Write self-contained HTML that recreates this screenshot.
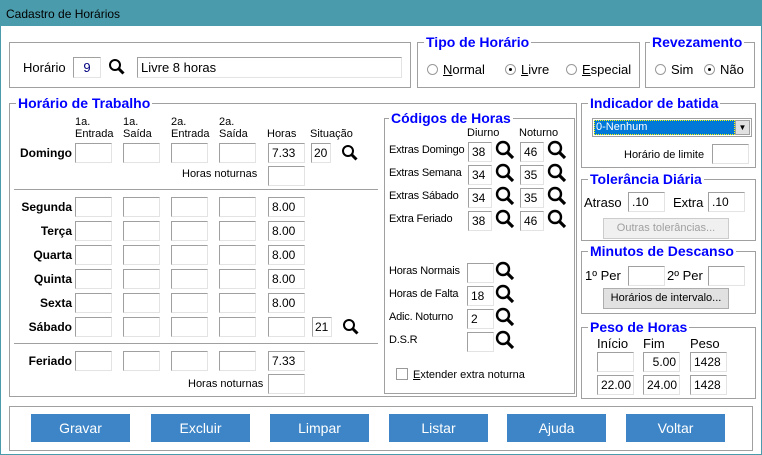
<!DOCTYPE html>
<html><head><meta charset="utf-8"><style>
*{box-sizing:border-box;margin:0;padding:0}
body{width:762px;height:455px;background:#fff;position:relative;overflow:hidden;font-family:"Liberation Sans",Arial,sans-serif;font-size:11px;color:#000}
.a{position:absolute;white-space:nowrap}
.t{position:absolute;left:0;top:0;width:762px;height:26px;background:#4a9bab;color:#000;font-size:12px;padding:7px 0 0 6px}
.fr{position:absolute;border:1px solid #4a9bab;border-top:none;left:0;top:26px;width:762px;height:429px}
.g{position:absolute;border:1px solid #a0a0a0;box-shadow:inset 1px 1px 0 #fff}
.cap{position:absolute;background:#fff;color:#0000ff;font-weight:bold;font-size:14px;padding:0 2px;top:-10px;left:6px;line-height:18px}
.i{position:absolute;height:20px;border:1px solid #e3e3e3;border-top-color:#a0a0a0;border-left-color:#a0a0a0;background:#fff;font-size:12px;padding:3px 0 0 3px;line-height:13px}
.b{font-weight:bold;font-size:12px}
.btn{position:absolute;top:414px;height:28px;width:99px;background:#3d85c6;color:#fff;font-size:14px;text-align:center;line-height:28px}
.mg{position:absolute;width:18px;height:18px}
.r{display:inline-block;width:11px;height:11px;border-radius:50%;border:1px solid #999;vertical-align:-1px;margin-right:5px;position:relative;background:#fff}
.r.on:after{content:"";position:absolute;left:3px;top:3px;width:3px;height:3px;border-radius:50%;background:#000}
.sb{position:absolute;height:21px;border:1px solid #adadad;background:#e1e1e1;font-size:11px;text-align:center;line-height:18px}
.hl{position:absolute;height:2px;border-top:1px solid #a0a0a0;border-bottom:1px solid #fff}
</style></head><body>
<div class="t">Cadastro de Horários</div>
<div class="fr"></div>

<div class="g" style="left:9px;top:42px;width:402px;height:46px"></div>
<div class="a" style="left:23px;top:60px;font-size:13px">Horário</div>
<div class="i" style="left:73px;top:57px;width:28px;height:21px;text-align:center;padding-left:0;color:#000080;font-size:13px">9</div>
<svg class="mg" style="left:108px;top:58px" viewBox="0 0 18 18"><circle cx="7" cy="7" r="5" fill="none" stroke="#000" stroke-width="2"/><path d="M10.5 10.5 L15.5 15.5" stroke="#000" stroke-width="3"/></svg>
<div class="i" style="left:137px;top:57px;width:265px;height:21px;font-size:13px">Livre 8 horas</div>

<div class="g" style="left:417px;top:42px;width:223px;height:46px"><div class="cap">Tipo de Horário</div></div>
<div class="a" style="left:427px;top:62px;font-size:13px"><span class="r"></span><u>N</u>ormal</div>
<div class="a" style="left:505px;top:62px;font-size:13px"><span class="r on"></span><u>L</u>ivre</div>
<div class="a" style="left:566px;top:62px;font-size:13px"><span class="r"></span><u>E</u>special</div>
<div class="g" style="left:645px;top:42px;width:110px;height:46px"><div class="cap" style="left:4px">Revezamento</div></div>
<div class="a" style="left:655px;top:62px;font-size:13px"><span class="r"></span>Sim</div>
<div class="a" style="left:704px;top:62px;font-size:13px"><span class="r on"></span>Não</div>

<div class="g" style="left:9px;top:103px;width:568px;height:294px"><div class="cap" style="left:6px">Horário de Trabalho</div></div>
<div class="a" style="left:75px;top:116px;line-height:12px">1a.<br>Entrada</div>
<div class="a" style="left:123px;top:116px;line-height:12px">1a.<br>Saída</div>
<div class="a" style="left:171px;top:116px;line-height:12px">2a.<br>Entrada</div>
<div class="a" style="left:219px;top:116px;line-height:12px">2a.<br>Saída</div>
<div class="a" style="left:267px;top:128px">Horas</div>
<div class="a" style="left:310px;top:128px">Situação</div>
<div class="hl" style="left:14px;top:189px;width:364px"></div>
<div class="hl" style="left:14px;top:343px;width:364px"></div>
<div class="a" style="left:182px;top:168px">Horas noturnas</div>
<div class="a" style="left:188px;top:378px">Horas noturnas</div>
<div class="i" style="left:268px;top:166px;width:37px"></div>
<div class="i" style="left:268px;top:374px;width:37px"></div>

<div id="rows"></div>
<script>
var rows=[["Domingo",143,"7.33","20",1],["Segunda",197,"8.00"],["Terça",221,"8.00"],["Quarta",245,"8.00"],["Quinta",269,"8.00"],["Sexta",293,"8.00"],["Sábado",317,"","21",1],["Feriado",351,"7.33"]];
var h="";
rows.forEach(function(r){
h+='<div class="a b" style="right:'+(762-72)+'px;top:'+(r[1]+3)+'px">'+r[0]+'</div>';
[75,123,171,219].forEach(function(x){h+='<div class="i" style="left:'+x+'px;top:'+r[1]+'px;width:37px"></div>';});
h+='<div class="i" style="left:268px;top:'+r[1]+'px;width:37px">'+r[2]+'</div>';
if(r[3]){var sx=r[0]=="Domingo"?311:312;h+='<div class="i" style="left:'+sx+'px;top:'+r[1]+'px;width:20px;padding-left:2px">'+r[3]+'</div>';
h+='<svg class="mg" style="left:'+(sx+30)+'px;top:'+(r[1]+1)+'px" viewBox="0 0 18 18"><circle cx="7" cy="7" r="5" fill="none" stroke="#000" stroke-width="2"/><path d="M10.5 10.5 L15.5 15.5" stroke="#000" stroke-width="3"/></svg>';}
});
var cod=[["Extras Domingo",140,"38","46"],["Extras Semana",163,"34","35"],["Extras Sábado",186,"34","35"],["Extra Feriado",209,"38","46"]];
var mg='viewBox="0 0 20 20"><circle cx="8" cy="8" r="6" fill="none" stroke="#000" stroke-width="2.4"/><path d="M12 12 L18 18" stroke="#000" stroke-width="3.2"/></svg>';
cod.forEach(function(c){
h+='<div class="a" style="left:389px;top:'+(c[1]+4)+'px;letter-spacing:-0.2px">'+c[0]+'</div>';
h+='<div class="i" style="left:468px;top:'+(c[1]+2)+'px;width:24px">'+c[2]+'</div>';
h+='<svg class="mg" style="left:495px;top:'+c[1]+'px;width:20px;height:20px" '+mg;
h+='<div class="i" style="left:520px;top:'+(c[1]+2)+'px;width:24px">'+c[3]+'</div>';
h+='<svg class="mg" style="left:547px;top:'+c[1]+'px;width:20px;height:20px" '+mg;
});
var c2=[["Horas Normais",261,""],["Horas de Falta",284,"18"],["Adic. Noturno",307,"2"],["D.S.R",330,""]];
c2.forEach(function(c){
h+='<div class="a" style="left:389px;top:'+(c[1]+4)+'px;letter-spacing:-0.2px">'+c[0]+'</div>';
h+='<div class="i" style="left:467px;top:'+(c[1]+2)+'px;width:27px">'+c[2]+'</div>';
h+='<svg class="mg" style="left:495px;top:'+c[1]+'px;width:20px;height:20px" '+mg;
});
document.getElementById("rows").innerHTML=h;
</script>

<div class="g" style="left:384px;top:118px;width:191px;height:276px"><div class="cap" style="left:4px">Códigos de Horas</div></div>
<div class="a" style="left:467px;top:127px">Diurno</div>
<div class="a" style="left:519px;top:127px">Noturno</div>
<div class="a" style="left:396px;top:368px"><span style="display:inline-block;width:12px;height:12px;border:1px solid #999;vertical-align:-2px;margin-right:5px"></span><u>E</u>xtender extra noturna</div>

<div class="g" style="left:581px;top:103px;width:175px;height:65px"><div class="cap" style="left:6px">Indicador de batida</div></div>
<div class="a" style="left:592px;top:118px;width:160px;height:19px;border:1px solid #a0a0a0;background:#fff">
<div style="position:absolute;left:1px;top:1px;width:141px;height:15px;background:#0078d7;color:#fff;border:1px dotted #ff0;padding-left:1px;line-height:13px">0-Nenhum</div>
<div style="position:absolute;right:1px;top:1px;width:15px;height:15px;background:#e1e1e1;border:1px solid #a0a0a0;font-size:8px;text-align:center;line-height:14px">▼</div></div>
<div class="a" style="left:624px;top:149px">Horário de limite</div>
<div class="i" style="left:712px;top:144px;width:37px"></div>

<div class="g" style="left:581px;top:179px;width:175px;height:62px"><div class="cap" style="left:6px">Tolerância Diária</div></div>
<div class="a" style="left:584px;top:195px;font-size:13px">Atraso</div>
<div class="i" style="left:628px;top:192px;width:37px">.10</div>
<div class="a" style="left:673px;top:195px;font-size:13px">Extra</div>
<div class="i" style="left:708px;top:192px;width:37px">.10</div>
<div class="sb" style="left:603px;top:218px;width:126px;color:#a0a0a0;background:#f0f0f0;border-color:#ccc">Outras tolerâncias...</div>

<div class="g" style="left:581px;top:251px;width:175px;height:63px"><div class="cap" style="left:6px">Minutos de Descanso</div></div>
<div class="a" style="left:585px;top:268px;font-size:13px">1º Per</div>
<div class="i" style="left:628px;top:266px;width:37px"></div>
<div class="a" style="left:667px;top:268px;font-size:13px">2º Per</div>
<div class="i" style="left:708px;top:266px;width:37px"></div>
<div class="sb" style="left:603px;top:288px;width:126px">Horários de intervalo...</div>

<div class="g" style="left:581px;top:327px;width:175px;height:72px"><div class="cap" style="left:6px">Peso de Horas</div></div>
<div class="a" style="left:597px;top:336px;font-size:13px">Início</div>
<div class="a" style="left:643px;top:336px;font-size:13px">Fim</div>
<div class="a" style="left:690px;top:336px;font-size:13px">Peso</div>
<div class="i" style="left:597px;top:352px;width:37px"></div>
<div class="i" style="left:643px;top:352px;width:37px;text-align:right;padding-right:3px">5.00</div>
<div class="i" style="left:690px;top:352px;width:37px">1428</div>
<div class="i" style="left:597px;top:375px;width:37px">22.00</div>
<div class="i" style="left:643px;top:375px;width:37px">24.00</div>
<div class="i" style="left:690px;top:375px;width:37px">1428</div>

<div class="g" style="left:9px;top:406px;width:744px;height:45px"></div>
<div class="btn" style="left:31px">Gravar</div>
<div class="btn" style="left:151px">Excluir</div>
<div class="btn" style="left:270px">Limpar</div>
<div class="btn" style="left:389px">Listar</div>
<div class="btn" style="left:507px">Ajuda</div>
<div class="btn" style="left:626px">Voltar</div>
</body></html>
